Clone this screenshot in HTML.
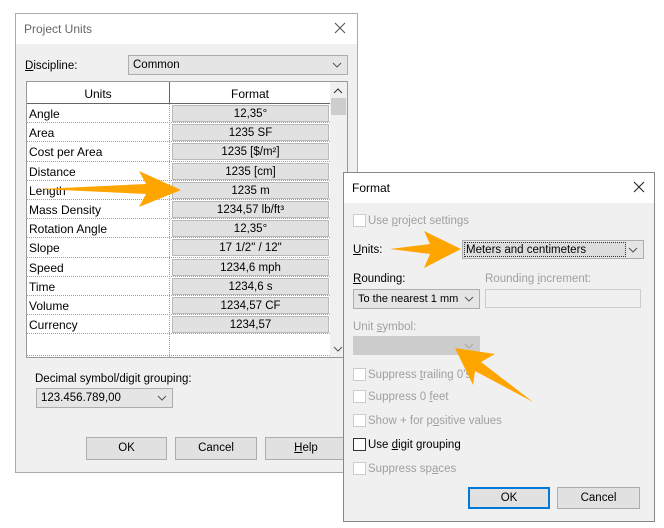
<!DOCTYPE html>
<html><head><meta charset="utf-8"><style>
*{box-sizing:border-box;margin:0;padding:0}
body{width:664px;height:528px;background:#fff;position:relative;overflow:hidden;font-family:"Liberation Sans",sans-serif;font-size:11.5px;color:#000}
.a{position:absolute}
.t{position:absolute;white-space:nowrap;line-height:14px}
.combo{position:absolute;background:#e5e5e5;border:1px solid #adadad;padding:3px 4px 0;line-height:13px;white-space:nowrap}
.chev{position:absolute;right:5px;top:4px;width:10px;height:10px}
.btn{position:absolute;background:#e1e1e1;border:1px solid #adadad;text-align:center;line-height:21px}
.g{color:#a0a0a0}
.cb{position:absolute;width:13px;height:13px;background:#fff;border:1px solid #ccc}
.row{position:absolute;left:0;width:303px;height:19.2px;border-bottom:1px dotted #a0a0a0;font-size:12px}
.row .n{position:absolute;left:2px;top:3px}
.row .f{position:absolute;left:145px;width:157px;top:1px;height:17px;background:#e1e1e1;border:1px solid #b8b8b8;text-align:center;line-height:16px;font-size:11.5px}
</style></head><body>
<!-- Project Units -->
<div class="a" style="left:15px;top:13px;width:343px;height:460px;background:#f0f0f0;border:1px solid #aaa"></div>
<div class="a" style="left:16px;top:14px;width:341px;height:30px;background:#fff"></div>
<div class="t" style="left:24px;top:22px;color:#666;font-size:12px">Project Units</div>
<svg class="a" style="left:334px;top:22px" width="12" height="12"><path d="M1 1L11 11M11 1L1 11" stroke="#555" stroke-width="1.1"/></svg>
<div class="t" style="left:25px;top:59px"><u>D</u>iscipline:</div>
<div class="combo" style="left:128px;top:55px;width:220px;height:20px">Common<svg class="chev" viewBox="0 0 10 10"><path d="M1 3l4 4 4-4" fill="none" stroke="#555"/></svg></div>
<div class="a" style="left:26px;top:81px;width:322px;height:277px;background:#fff;border:1px solid #999"></div>
<div class="a" style="left:27px;top:82px;width:303px;height:22px;border-bottom:1px solid #666">
 <div class="a" style="left:142px;top:0;width:1px;height:22px;background:#666"></div>
 <div class="t" style="left:0;width:142px;text-align:center;top:5px;font-size:12px">Units</div>
 <div class="t" style="left:143px;width:160px;text-align:center;top:5px;font-size:12px">Format</div>
</div>
<div class="a" style="left:27px;top:104px;width:303px;height:253px">
 <div class="a" style="left:142px;top:0;width:0;height:253px;border-left:1px dotted #a0a0a0"></div>
 <div class="row" style="top:0"><span class="n">Angle</span><span class="f">12,35°</span></div>
 <div class="row" style="top:19.2px"><span class="n">Area</span><span class="f">1235 SF</span></div>
 <div class="row" style="top:38.4px"><span class="n">Cost per Area</span><span class="f">1235 [$/m²]</span></div>
 <div class="row" style="top:57.6px"><span class="n">Distance</span><span class="f">1235 [cm]</span></div>
 <div class="row" style="top:76.8px"><span class="n">Length</span><span class="f">1235 m</span></div>
 <div class="row" style="top:96px"><span class="n">Mass Density</span><span class="f">1234,57 lb/ft³</span></div>
 <div class="row" style="top:115.2px"><span class="n">Rotation Angle</span><span class="f">12,35°</span></div>
 <div class="row" style="top:134.4px"><span class="n">Slope</span><span class="f">17 1/2" / 12"</span></div>
 <div class="row" style="top:153.6px"><span class="n">Speed</span><span class="f">1234,6 mph</span></div>
 <div class="row" style="top:172.8px"><span class="n">Time</span><span class="f">1234,6 s</span></div>
 <div class="row" style="top:192px"><span class="n">Volume</span><span class="f">1234,57 CF</span></div>
 <div class="row" style="top:211.2px"><span class="n">Currency</span><span class="f">1234,57</span></div>
 <div class="row" style="top:230.4px;height:22px"></div>
</div>
<div class="a" style="left:330px;top:82px;width:17px;height:275px;background:#f0f0f0"></div>
<svg class="a" style="left:333px;top:87px" width="10" height="8"><path d="M1 6l4-4 4 4" fill="none" stroke="#333"/></svg>
<div class="a" style="left:331px;top:98px;width:15px;height:17px;background:#cdcdcd"></div>
<svg class="a" style="left:333px;top:345px" width="10" height="8"><path d="M1 2l4 4 4-4" fill="none" stroke="#555"/></svg>
<div class="t" style="left:35px;top:372px">Decimal symbol/digit grouping:</div>
<div class="combo" style="left:36px;top:388px;width:137px;height:20px">123.456.789,00<svg class="chev" viewBox="0 0 10 10"><path d="M1 3l4 4 4-4" fill="none" stroke="#555"/></svg></div>
<div class="btn" style="left:86px;top:437px;width:81px;height:23px">OK</div>
<div class="btn" style="left:175px;top:437px;width:82px;height:23px">Cancel</div>
<div class="btn" style="left:265px;top:437px;width:82px;height:23px"><u>H</u>elp</div>
<!-- Arrow 1 -->
<svg class="a" style="left:0;top:0" width="664" height="528"><polygon points="40,189 146,184 139,171 181,190 139,207 146,194" fill="#ffa500"/></svg>
<!-- Format -->
<div class="a" style="left:343px;top:172px;width:312px;height:350px;background:#f0f0f0;border:1px solid #888"></div>
<div class="a" style="left:344px;top:173px;width:310px;height:30px;background:#fff"></div>
<div class="t" style="left:352px;top:181px;font-size:12px">Format</div>
<svg class="a" style="left:633px;top:181px" width="12" height="12"><path d="M1 1L11 11M11 1L1 11" stroke="#222" stroke-width="1.1"/></svg>
<div class="cb" style="left:353px;top:214px"></div>
<div class="t g" style="left:368px;top:214px">Use <u>p</u>roject settings</div>
<div class="t" style="left:353px;top:243px"><u>U</u>nits:</div>
<div class="combo" style="left:462px;top:240px;width:182px;height:19px;padding:0"><div class="a" style="left:1px;top:1px;width:162px;height:15px;border:1px dotted #333;background:#dcdcdc;padding-left:1px;line-height:14px">Meters and centimeters</div><svg class="chev" style="top:4px" viewBox="0 0 10 10"><path d="M1 3l4 4 4-4" fill="none" stroke="#555"/></svg></div>
<div class="t" style="left:353px;top:272px"><u>R</u>ounding:</div>
<div class="t g" style="left:485px;top:272px">Rounding <u>i</u>ncrement:</div>
<div class="combo" style="left:353px;top:289px;width:127px;height:20px;font-size:11px">To the nearest 1 mm<svg class="chev" viewBox="0 0 10 10"><path d="M1 3l4 4 4-4" fill="none" stroke="#555"/></svg></div>
<div class="a" style="left:485px;top:289px;width:156px;height:19px;background:#f0f0f0;border:1px solid #ccc"></div>
<div class="t g" style="left:353px;top:320px">Unit <u>s</u>ymbol:</div>
<div class="combo" style="left:353px;top:336px;width:127px;height:19px;background:#ccc;border-color:#ccc"><svg class="chev" viewBox="0 0 10 10"><path d="M1 3l4 4 4-4" fill="none" stroke="#aaa"/></svg></div>
<div class="cb" style="left:353px;top:368px"></div><div class="t g" style="left:368px;top:368px">Suppress <u>t</u>railing 0's</div>
<div class="cb" style="left:353px;top:390px"></div><div class="t g" style="left:368px;top:390px">Suppress 0 <u>f</u>eet</div>
<div class="cb" style="left:353px;top:414px"></div><div class="t g" style="left:368px;top:414px">Show + for p<u>o</u>sitive values</div>
<div class="cb" style="left:353px;top:438px;border-color:#333"></div><div class="t" style="left:368px;top:438px">Use <u>d</u>igit grouping</div>
<div class="cb" style="left:353px;top:462px"></div><div class="t g" style="left:368px;top:462px">Suppress sp<u>a</u>ces</div>
<div class="btn" style="left:468px;top:487px;width:82px;height:22px;border:2px solid #0078d7;line-height:18px">OK</div>
<div class="btn" style="left:557px;top:487px;width:83px;height:22px;line-height:20px">Cancel</div>
<!-- Arrows 2,3 -->
<svg class="a" style="left:0;top:0" width="664" height="528">
<polygon points="390,249 430,244 424,231 461,249 424,268 430,254" fill="#ffa500"/>
<polygon points="455,348 495,354 481,362 533,402 475,371 473,385" fill="#ffa500"/>
</svg>
</body></html>
